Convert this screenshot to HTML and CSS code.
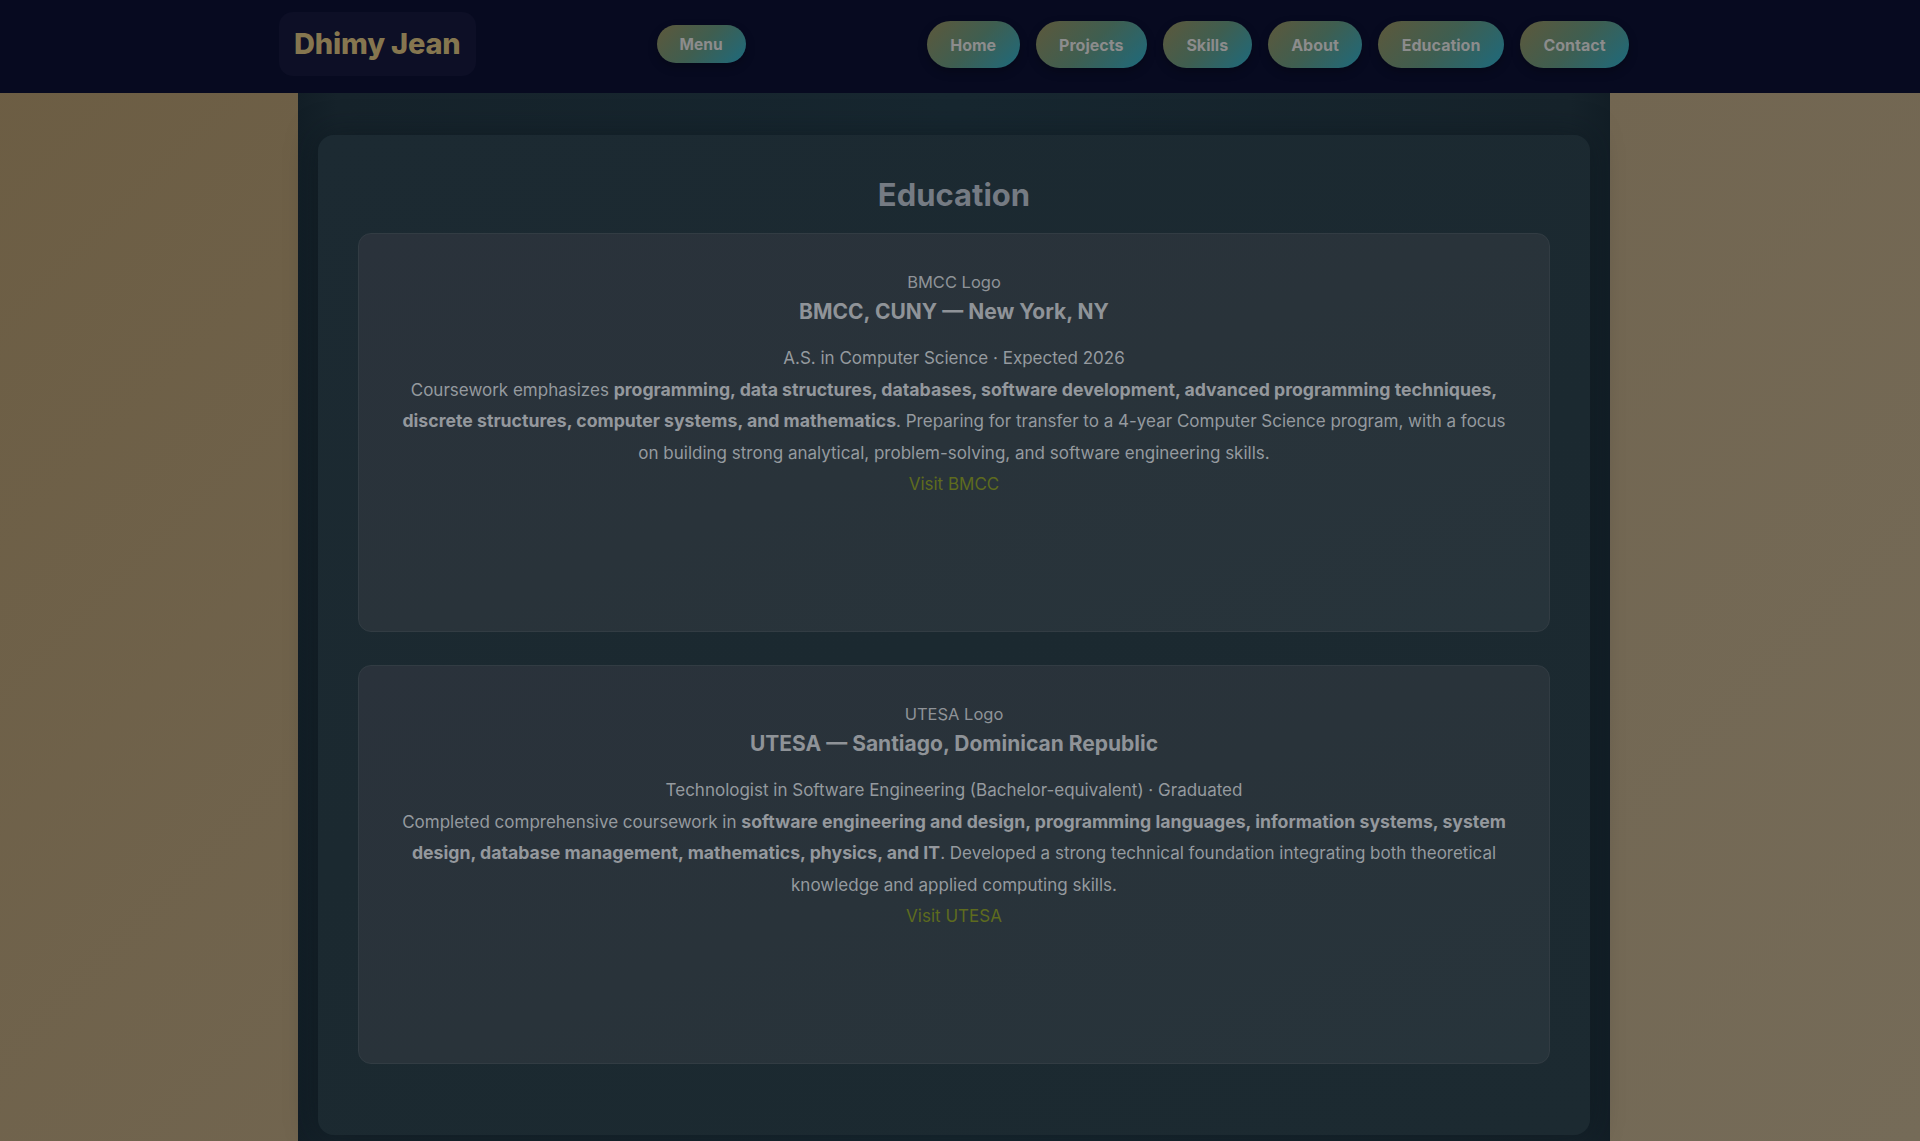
FILE: index.html
```html
<!DOCTYPE html>
<html lang="en">
<head>
<meta charset="utf-8">
<title>Dhimy Jean — Education</title>
<link rel="stylesheet" href="styles.css">
</head>
<body>
<header class="site-header">
  <div class="header-inner">
    <div class="logo">Dhimy Jean</div>
    <button class="pill pill-menu">Menu</button>
    <nav class="nav">
      <a class="pill" href="#">Home</a>
      <a class="pill" href="#">Projects</a>
      <a class="pill" href="#">Skills</a>
      <a class="pill" href="#">About</a>
      <a class="pill" href="#">Education</a>
      <a class="pill" href="#">Contact</a>
    </nav>
  </div>
</header>
<main class="page">
  <section class="section">
    <h2 class="section-title">Education</h2>
    <article class="edu-card">
      <div class="edu-logo">BMCC Logo</div>
      <h3 class="edu-name">BMCC, CUNY — New York, NY</h3>
      <p class="edu-degree">A.S. in Computer Science · Expected 2026</p>
      <p class="edu-desc">Coursework emphasizes <strong>programming, data structures, databases, software development, advanced programming techniques, discrete structures, computer systems, and mathematics</strong>. Preparing for transfer to a 4-year Computer Science program, with a focus on building strong analytical, problem-solving, and software engineering skills.</p>
      <a class="edu-link" href="#">Visit BMCC</a>
    </article>
    <article class="edu-card">
      <div class="edu-logo">UTESA Logo</div>
      <h3 class="edu-name">UTESA — Santiago, Dominican Republic</h3>
      <p class="edu-degree">Technologist in Software Engineering (Bachelor-equivalent) · Graduated</p>
      <p class="edu-desc">Completed comprehensive coursework in <strong>software engineering and design, programming languages, information systems, system design, database management, mathematics, physics, and IT</strong>. Developed a strong technical foundation integrating both theoretical knowledge and applied computing skills.</p>
      <a class="edu-link" href="#">Visit UTESA</a>
    </article>
  </section>
</main>
</body>
</html>
```
FILE: styles.css
```css
* { box-sizing: border-box; }
html, body { margin: 0; padding: 0; }
body {
  font-family: Inter, "Noto Sans", "Liberation Sans", sans-serif;
  background: linear-gradient(135deg, #6c5d43 0%, #726651 55%, #756b58 100%);
  min-height: 1141px;
  overflow: hidden;
}
.site-header {
  background: #070a20;
  height: 93px;
  padding: 12px 0 17px;
}
.header-inner {
  width: 1350px;
  margin-left: 279px;
  height: 64px;
  display: flex;
  align-items: center;
  justify-content: space-between;
}
.logo {
  background: #0d0f26;
  color: #85764f;
  font-weight: 800;
  font-size: 29px;
  line-height: 64px;
  height: 64px;
  padding: 0 15px;
  border-radius: 14px;
  letter-spacing: -0.2px;
}
.pill {
  display: inline-flex;
  align-items: center;
  justify-content: center;
  height: 47px;
  padding: 0 23.5px;
  border: none;
  border-radius: 999px;
  background: linear-gradient(135deg, #5d583b 0%, #3f5e50 50%, #1d6a7d 100%);
  color: #8c8c8c;
  font-family: Inter, "Noto Sans", sans-serif;
  font-weight: 700;
  font-size: 16px;
  text-decoration: none;
  box-shadow: 0 4px 10px rgba(0, 0, 0, 0.25);
}
.pill-menu {
  height: 38px;
  padding: 0 23px;
  font-size: 15.5px;
}
.nav {
  display: flex;
  gap: 16px;
  margin-top: 1px;
}
.page {
  width: 1312px;
  margin-left: 298px;
  background: linear-gradient(90deg, #121e26 0%, #16232b 3%, #172730 50%, #16232b 97%, #121e26 100%);
  padding: 42px 20px 6px;
}
.section {
  height: 1000px;
  background: linear-gradient(160deg, #1c2a32 0%, #1b2930 50%, #1c2a31 100%);
  border-radius: 16px;
  padding: 40px 40px 0;
  box-shadow: 0 0 30px rgba(10, 20, 26, 0.5);
}
.section-title {
  margin: 0 0 18px;
  text-align: center;
  font-size: 31px;
  line-height: 40px;
  font-weight: 700;
  color: #757b83;
}
.edu-card {
  min-height: 399px;
  margin-bottom: 33px;
  background: linear-gradient(160deg, #2a323b 0%, #29333a 50%, #27343b 100%);
  border: 1px solid #323c43;
  border-radius: 13px;
  padding: 36px 40px 40px;
  text-align: center;
  color: #959a9f;
}
.edu-logo {
  font-size: 16.5px;
  line-height: 24px;
  color: #8f9398;
}
.edu-name {
  margin: 4px 0 0;
  font-size: 21px;
  line-height: 28px;
  font-weight: 700;
  color: #8f9398;
}
.edu-degree {
  margin: 17px 0 0;
  font-size: 17px;
  line-height: 31.5px;
  color: #959a9f;
}
.edu-desc {
  margin: 0;
  font-size: 17px;
  line-height: 31.5px;
  color: #959a9f;
}
.edu-desc strong {
  font-weight: 700;
  font-size: 17.7px;
  line-height: 1;
  color: #94989d;
}
.edu-link {
  display: inline-block;
  font-size: 17px;
  line-height: 31.5px;
  color: #5e6b1e;
  text-decoration: none;
}
```
